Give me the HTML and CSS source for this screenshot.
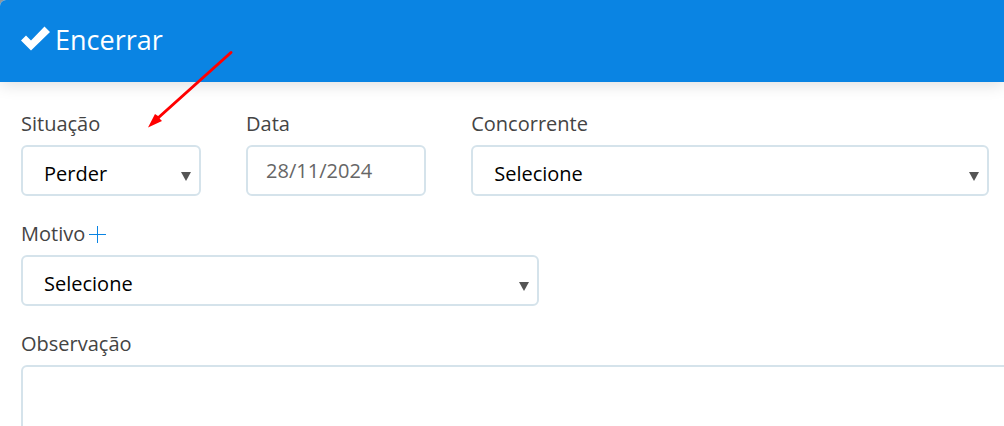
FILE: index.html
```html
<!DOCTYPE html>
<html lang="pt-BR">
  <head>
    <meta charset="UTF-8" />
    <meta name="viewport" content="width=device-width, initial-scale=1.0" />
    <title>Encerrar</title>
    <link rel="stylesheet" href="styles.css">
  </head>
  <body>
    <div class="modal">
      <header class="modal-header">
        <svg class="check" viewBox="0 0 28 24" aria-hidden="true">
          <path d="M0 14.500L5 9.500L10 14.500L23.500 0.500L29 6L10 24.500Z" fill="currentColor" />
        </svg>
        <h1>Encerrar</h1>
      </header>
      <form class="form">
        <div class="field col-2">
          <label for="situacao">Situação</label>
          <div class="select">
            <select id="situacao">
              <option>Perder</option>
            </select>
          </div>
        </div>
        <div class="field col-2">
          <label for="data">Data</label>
          <input id="data" type="text" value="28/11/2024" />
        </div>
        <div class="field col-5">
          <label for="concorrente">Concorrente</label>
          <div class="select">
            <select id="concorrente">
              <option>Selecione</option>
            </select>
          </div>
        </div>
        <div class="field col-5">
          <div class="label-row">
            <label for="motivo">Motivo</label>
            <button class="add" type="button" aria-label="Adicionar motivo">
              <svg viewBox="0 0 17 17">
                <path d="M8.500 0V17M0 8.500H17" stroke="currentColor" />
              </svg>
            </button>
          </div>
          <div class="select">
            <select id="motivo">
              <option>Selecione</option>
            </select>
          </div>
        </div>
        <div class="field col-full">
          <label for="observacao">Observação</label>
          <textarea id="observacao" rows="4"></textarea>
        </div>
      </form>
    </div>
    <svg class="arrow" viewBox="0 0 86 78" aria-hidden="true">
      <path d="M83 2.500L10 68" stroke="currentColor" stroke-width="3" stroke-linecap="round" />
      <path d="M0 77.500L7 64L10 66L12 69L14 71Z" fill="currentColor" />
    </svg>
  </body>
</html>
```

FILE: styles.css
```css
* {
  margin: 0;
  box-sizing: border-box;
  font-family: "Open Sans", "Noto Sans", sans-serif;
}
body {
  background-color: #8f979c;
  color: #444;
  font-size: 20px;
  overflow: hidden;
}
.modal {
  min-height: 100vh;
  background-color: #fff;
  border-radius: 6px 0 0 0;
  overflow: hidden;
}
.modal-header {
  display: flex;
  align-items: center;
  gap: 6px;
  height: 82px;
  padding: 0 21px 2px;
  background-color: #0a84e3;
  color: #fff;
  box-shadow: 0 2px 16px rgba(0, 0, 0, 0.14);
}
.modal-header h1 {
  font-size: 27px;
  font-weight: 400;
  line-height: 36px;
}
.check {
  width: 28px;
  height: 24px;
  margin-bottom: 4px;
  overflow: visible;
}
.form {
  display: grid;
  grid-template-columns: repeat(9, minmax(0, 1fr));
  gap: 24px 45px;
  padding: 28px 15px 0 21px;
}
.field {
  display: flex;
  flex-direction: column;
  gap: 7px;
}
.field label {
  line-height: 28px;
}
.col-2 {
  grid-column: span 2;
}
.col-5 {
  grid-column: span 5;
}
/* runs on past the right edge of the window */
.col-full {
  grid-column: 1 / -1;
  margin-right: -40px;
}
.label-row {
  display: flex;
  align-items: center;
  gap: 4px;
}
.add {
  display: flex;
  padding: 0;
  border: none;
  background: transparent;
  color: #0a84e3;
}
.add svg {
  width: 17px;
  height: 17px;
}
select,
input,
textarea {
  display: block;
  width: 100%;
  border: 2px solid #d5e3eb;
  border-radius: 6px;
  background-color: #fff;
  font-size: 20px;
}
select,
input {
  height: 51px;
}
select {
  appearance: none;
  padding: 6px 40px 0 21px;
  color: #000;
}
input {
  padding: 0 18px;
  color: #666;
}
textarea {
  padding: 12px 18px;
  resize: none;
}
.select {
  position: relative;
}
.select::after {
  content: "";
  position: absolute;
  top: 27px;
  right: 10px;
  border: 5px solid transparent;
  border-top: 9px solid #555;
  border-bottom: none;
  pointer-events: none;
}
.arrow {
  position: absolute;
  top: 50px;
  left: 148px;
  width: 86px;
  height: 78px;
  color: #f00;
  fill: none;
  pointer-events: none;
}
```
